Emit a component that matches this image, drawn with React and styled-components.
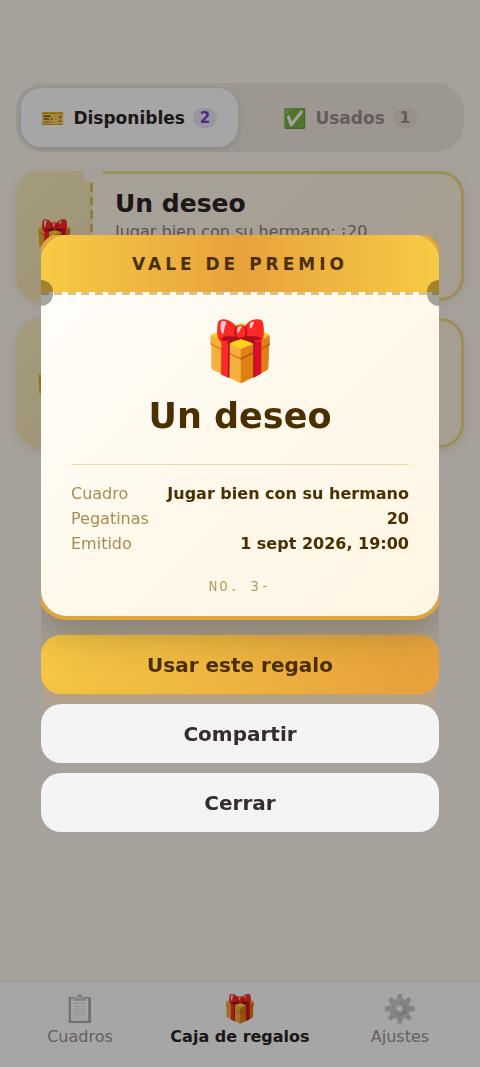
import React from "react";
import styled, { createGlobalStyle } from "styled-components";

const GlobalStyle = createGlobalStyle`
  * {
    box-sizing: border-box;
  }

  body {
    margin: 0;
    background: #fff7ee;
    color: #2d2424;
    font-family: "DejaVu Sans", "Noto Color Emoji", sans-serif;
  }

  button {
    font-family: inherit;
    border: none;
    cursor: pointer;
  }
`;

//page behind the dialog
const Page = styled.main`
  min-height: 100vh;
  padding: 83px 16px 104px;
`;

const Tabs = styled.div`
  display: grid;
  grid-template-columns: 1fr 1fr;
  gap: 4px;
  padding: 5px;
  border-radius: 28px;
  background: #f0e8df;
`;

const Tab = styled.button`
  display: flex;
  align-items: center;
  justify-content: center;
  gap: 8px;
  height: 59px;
  padding: 0;
  border-radius: 20px;
  font-size: 17px;
  line-height: 20px;
  font-weight: 700;
  color: ${(props) => (props.$active ? "#2d2424" : "#9b8c8c")};
  background: ${(props) => (props.$active ? "#fff" : "transparent")};
  box-shadow: ${(props) =>
    props.$active ? "0 2px 6px rgba(60, 40, 30, 0.14)" : "none"};
`;

const TabIcon = styled.span`
  font-size: 19px;
  font-weight: 400;
`;

const Count = styled.span`
  min-width: 24px;
  padding: 0 7px;
  border-radius: 10px;
  font-size: 15px;
  line-height: 20px;
  color: ${(props) => (props.$active ? "#7c3fc4" : "#9b8c8c")};
  background: ${(props) => (props.$active ? "#ebe3f5" : "#e6ddd5")};
`;

const List = styled.div`
  display: flex;
  flex-direction: column;
  gap: 17px;
  margin-top: 19px;
`;

//small ticket of the list
const Card = styled.article`
  position: relative;
  display: flex;
  height: 130px;
  border-radius: 24px;
  box-shadow: 0 3px 10px rgba(120, 80, 60, 0.1);
`;

const Stub = styled.div`
  display: flex;
  align-items: center;
  justify-content: center;
  width: 77px;
  border-radius: 24px 0 0 24px;
  font-size: 31px;
  background: linear-gradient(135deg, #fbeec0, #f5e6b4);

  &::after {
    content: "";
    position: absolute;
    top: 12px;
    bottom: 12px;
    left: 74px;
    width: 3px;
    background: repeating-linear-gradient(
      #dcc066 0 9px,
      transparent 9px 14px,
      #dcc066 14px 22px,
      transparent 22px 27px
    );
  }
`;

const CardBody = styled.div`
  flex: 1;
  padding: 15px 20px 15px 22px;
  border: 3px solid #eddc8c;
  border-left: none;
  border-radius: 0 24px 24px 0;
  background: linear-gradient(135deg, #fff8ea, #fff3de);
`;

const CardTitle = styled.h2`
  margin: 0;
  font-size: 25px;
  line-height: 30px;
`;

const CardText = styled.p`
  margin: 3px 0 0;
  font-size: 16px;
  line-height: 20px;
  color: #8c7d7d;
`;

const CardNotch = styled.span`
  position: absolute;
  left: 67px;
  width: 20px;
  height: 20px;
  border-radius: 50%;
  background: #fdf5ec;
  ${(props) => (props.$bottom ? "bottom: -8px;" : "top: -8px;")}
`;

//bottom bar
const Nav = styled.nav`
  position: fixed;
  left: 0;
  right: 0;
  bottom: 0;
  display: grid;
  grid-template-columns: repeat(3, 1fr);
  height: 87px;
  padding-top: 9px;
  border-top: 2px solid #f0f0ec;
  background: #fff;
`;

const NavLink = styled.a`
  display: flex;
  flex-direction: column;
  align-items: center;
  font-size: 16px;
  line-height: 20px;
  white-space: nowrap;
  text-decoration: none;
  font-weight: ${(props) => (props.$active ? 700 : 400)};
  color: ${(props) => (props.$active ? "#2d2424" : "#9b9292")};
`;

const NavIcon = styled.span`
  font-size: 27px;
  line-height: 36px;
  font-weight: 400;
  filter: ${(props) => (props.$active ? "none" : "grayscale(1)")};
  opacity: ${(props) => (props.$active ? 1 : 0.6)};
`;

//dialog
const Overlay = styled.div`
  position: fixed;
  inset: 0;
  display: flex;
  align-items: center;
  justify-content: center;
  padding: 20px 41px;
  background: rgba(0, 0, 0, 0.35);
`;

const Dialog = styled.div`
  display: flex;
  flex-direction: column;
  gap: 10px;
  width: 100%;
  max-width: 420px;
  max-height: 100%;
  overflow: auto;
`;

const Ticket = styled.section`
  position: relative;
  flex-shrink: 0;
  margin-bottom: 9px;
  border-radius: 26px;
  background: linear-gradient(135deg, #fffefb, #fff9ec 50%, #fff5e4);
  box-shadow: 0 0 0 4px #e0a53c, 0 16px 40px rgba(60, 50, 20, 0.35);
`;

const TicketHead = styled.h2`
  position: relative;
  margin: 0;
  padding-bottom: 1px;
  border-radius: 26px 26px 0 0;
  font-size: 17px;
  line-height: 59px;
  letter-spacing: 4px;
  text-align: center;
  color: #4a3000;
  background: linear-gradient(90deg, #f7ca45, #e8a23c 50%, #f7ca45);

  &::after {
    content: "";
    position: absolute;
    left: 0;
    right: 0;
    bottom: 0;
    height: 3px;
    background: repeating-linear-gradient(
      90deg,
      #dcc383 0 8px,
      #fffdf5 8px 13px,
      #dcc383 13px 21px,
      #fffdf5 21px 27px
    );
  }
`;

const Notch = styled.span`
  position: absolute;
  z-index: 1;
  top: 45px;
  width: 12px;
  height: 26px;
  background: rgba(0, 0, 0, 0.35);
  ${(props) =>
    props.$right
      ? "right: 0; border-radius: 12px 0 0 12px;"
      : "left: 0; border-radius: 0 12px 12px 0;"}
`;

const TicketBody = styled.div`
  padding: 20px 30px 20px;
  text-align: center;
`;

const Gift = styled.div`
  font-size: 58px;
  line-height: 72px;
`;

const Reward = styled.h1`
  margin: 8px 0 27px;
  font-size: 35px;
  line-height: 42px;
  color: #4a3000;
`;

const Details = styled.dl`
  display: grid;
  gap: 5px;
  margin: 0;
  padding-top: 19px;
  border-top: 1px solid #f8d5a8;
`;

const Detail = styled.div`
  display: flex;
  justify-content: space-between;
  font-size: 16px;
  line-height: 20px;

  dt {
    color: #a68c50;
  }

  dd {
    margin: 0;
    font-weight: 700;
    color: #4a3000;
  }
`;

const Serial = styled.p`
  margin: 22px 0 0;
  font-family: "DejaVu Sans Mono", monospace;
  font-size: 14px;
  line-height: 20px;
  letter-spacing: 2px;
  color: #b89d62;
`;

const Button = styled.button`
  flex-shrink: 0;
  height: 59px;
  border-radius: 20px;
  font-size: 20px;
  font-weight: 700;
  color: #352c2c;
  background: #f5f4f4;
`;

const MainButton = styled(Button)`
  color: #4a3000;
  background: linear-gradient(135deg, #f7ca45, #e8a23c 90%);
  box-shadow: 0 6px 20px rgba(232, 162, 60, 0.4);
`;

const vouchers = [
  { id: 1, title: "Un deseo", text: "Jugar bien con su hermano: ¡20 pegatinas!" },
  { id: 2, title: "Un deseo", text: "Jugar bien con su hermano: ¡20 pegatinas!" },
];

const details = [
  ["Cuadro", "Jugar bien con su hermano"],
  ["Pegatinas", "20"],
  ["Emitido", "1 sept 2026, 19:00"],
];

export default function App() {
  return (
    <>
      <GlobalStyle />
      <Page>
        <Tabs role="tablist">
          <Tab role="tab" aria-selected="true" $active>
            <TabIcon>🎫</TabIcon>
            Disponibles
            <Count $active>2</Count>
          </Tab>
          <Tab role="tab" aria-selected="false">
            <TabIcon>✅</TabIcon>
            Usados
            <Count>1</Count>
          </Tab>
        </Tabs>
        <List>
          {vouchers.map((v) => (
            <Card key={v.id}>
              <Stub>🎁</Stub>
              <CardBody>
                <CardTitle>{v.title}</CardTitle>
                <CardText>{v.text}</CardText>
              </CardBody>
              <CardNotch />
              <CardNotch $bottom />
            </Card>
          ))}
        </List>
      </Page>
      <Nav>
        <NavLink href="#cuadros">
          <NavIcon>📋</NavIcon>
          Cuadros
        </NavLink>
        <NavLink href="#regalos" $active>
          <NavIcon $active>🎁</NavIcon>
          Caja de regalos
        </NavLink>
        <NavLink href="#ajustes">
          <NavIcon>⚙️</NavIcon>
          Ajustes
        </NavLink>
      </Nav>
      <Overlay>
        <Dialog role="dialog" aria-modal="true" aria-label="Vale de premio">
          <Ticket>
            <TicketHead>VALE DE PREMIO</TicketHead>
            <Notch />
            <Notch $right />
            <TicketBody>
              <Gift>🎁</Gift>
              <Reward>Un deseo</Reward>
              <Details>
                {details.map(([name, value]) => (
                  <Detail key={name}>
                    <dt>{name}</dt>
                    <dd>{value}</dd>
                  </Detail>
                ))}
              </Details>
              <Serial>NO. 3-</Serial>
            </TicketBody>
          </Ticket>
          <MainButton>Usar este regalo</MainButton>
          <Button>Compartir</Button>
          <Button>Cerrar</Button>
        </Dialog>
      </Overlay>
    </>
  );
}
